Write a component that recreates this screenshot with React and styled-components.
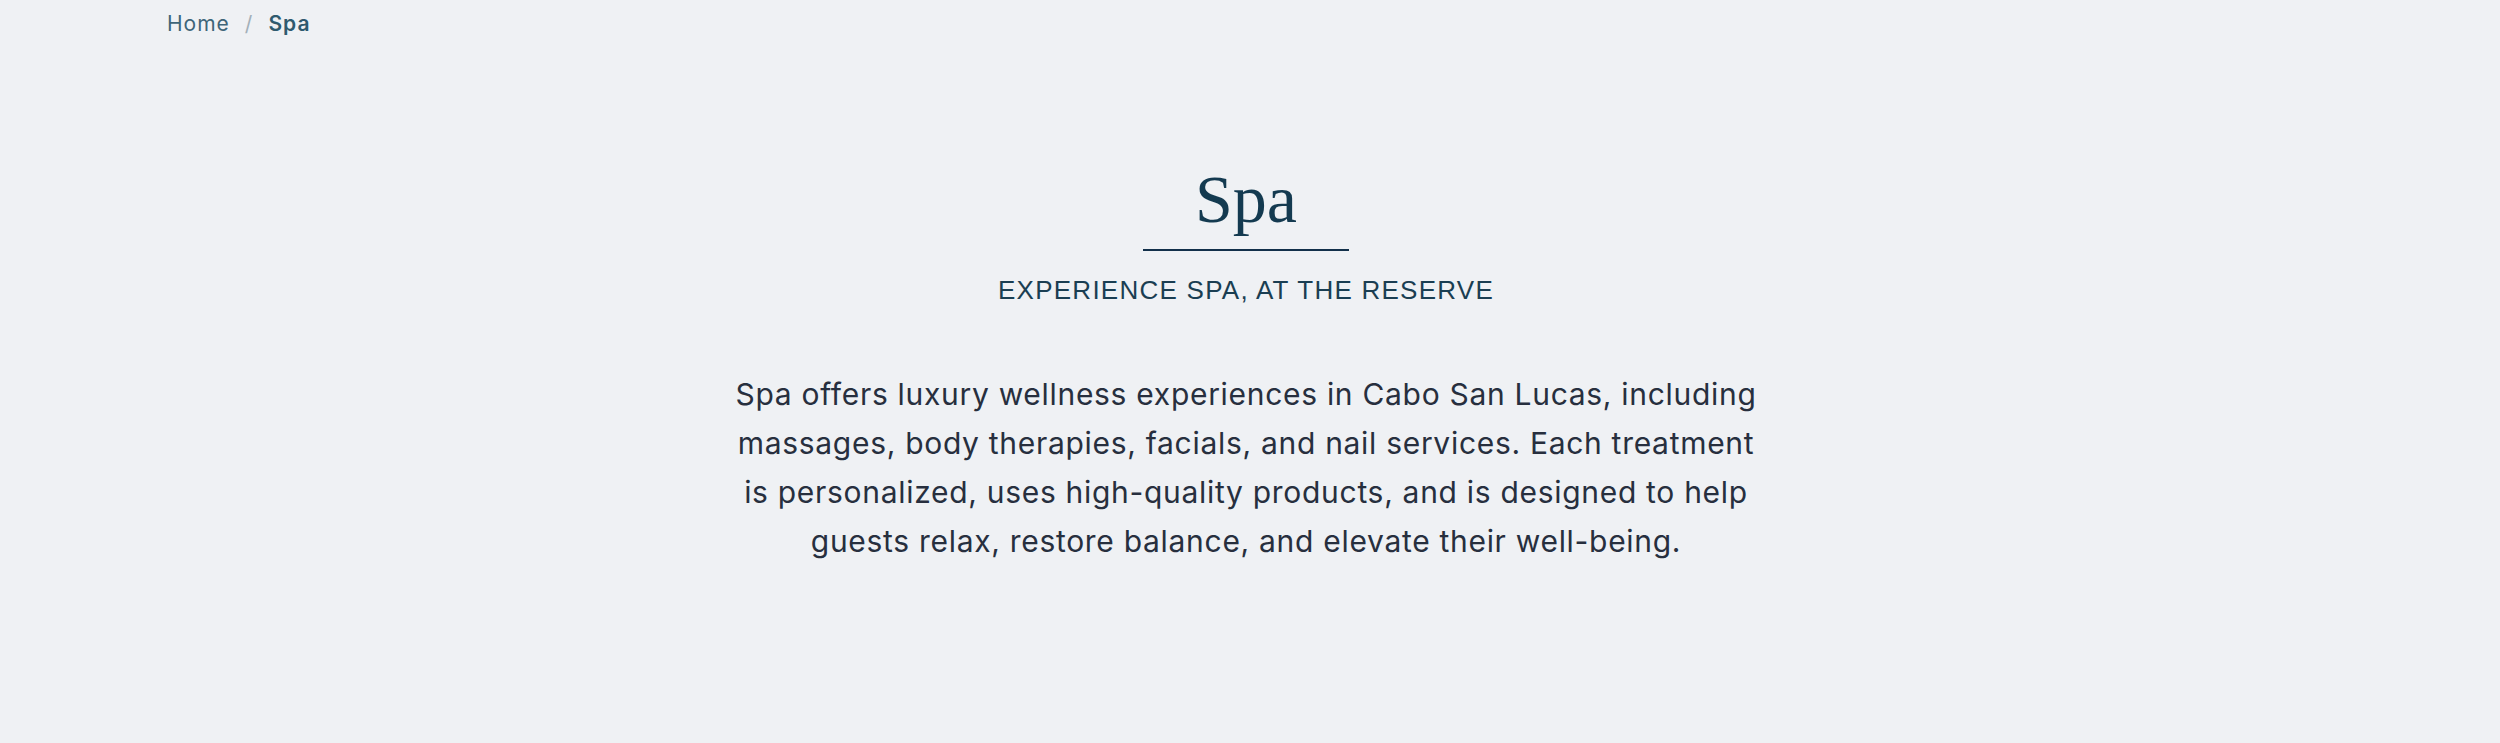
import styled, { createGlobalStyle } from "styled-components";

const GlobalStyle = createGlobalStyle`
  html, body {
    margin: 0;
    padding: 0;
    background: #eff1f4;
  }
  body {
    font-family: "Inter", "Liberation Sans", sans-serif;
  }
`;

const Page = styled.div`
  min-height: 743px;
  background: #eff1f4;
`;

const Breadcrumbs = styled.nav`
  max-width: 2166px;
  margin: 0 auto;
  padding-top: 10px;
  display: flex;
  align-items: center;
  gap: 15px;
  font-family: "Inter", sans-serif;
  font-size: 21px;
  line-height: 28px;
  letter-spacing: 1px;
`;

const Crumb = styled.a`
  color: ${(p) => (p.current ? "#2f5a6e" : "#3e6579")};
  font-weight: ${(p) => (p.current ? 600 : 400)};
  text-decoration: none;
`;

const Slash = styled.span`
  color: #a3b0b9;
`;

const Hero = styled.section`
  display: flex;
  flex-direction: column;
  align-items: center;
  padding: 127px 8px 0 0;
  text-align: center;
`;

const Title = styled.h1`
  margin: 0;
  font-family: "Liberation Serif", serif;
  font-weight: 400;
  font-size: 68px;
  line-height: 68px;
  color: #143a50;
`;

const Rule = styled.hr`
  width: 206px;
  height: 2px;
  margin: 16px 0 0;
  border: 0;
  background: #12304a;
`;

const Subtitle = styled.h2`
  margin: 24px 0 0;
  font-family: "Liberation Sans", sans-serif;
  font-weight: 400;
  font-size: 26px;
  line-height: 31px;
  letter-spacing: 1.25px;
  color: #1a3e52;
  text-transform: uppercase;
`;

const Intro = styled.p`
  margin: 64px 0 0;
  max-width: 1100px;
  font-family: "Inter", sans-serif;
  font-size: 30px;
  line-height: 49px;
  letter-spacing: 0.7px;
  color: #272f3e;
`;

const lines = [
  "Spa offers luxury wellness experiences in Cabo San Lucas, including",
  "massages, body therapies, facials, and nail services. Each treatment",
  "is personalized, uses high-quality products, and is designed to help",
  "guests relax, restore balance, and elevate their well-being.",
];

export default function App() {
  return (
    <Page>
      <GlobalStyle />
      <Breadcrumbs>
        <Crumb href="#">Home</Crumb>
        <Slash>/</Slash>
        <Crumb current>Spa</Crumb>
      </Breadcrumbs>
      <Hero>
        <Title>Spa</Title>
        <Rule />
        <Subtitle>Experience Spa, at the Reserve</Subtitle>
        <Intro>
          {lines.map((l, i) => (
            <span key={i}>
              {l}
              {i < lines.length - 1 && <br />}
            </span>
          ))}
        </Intro>
      </Hero>
    </Page>
  );
}
